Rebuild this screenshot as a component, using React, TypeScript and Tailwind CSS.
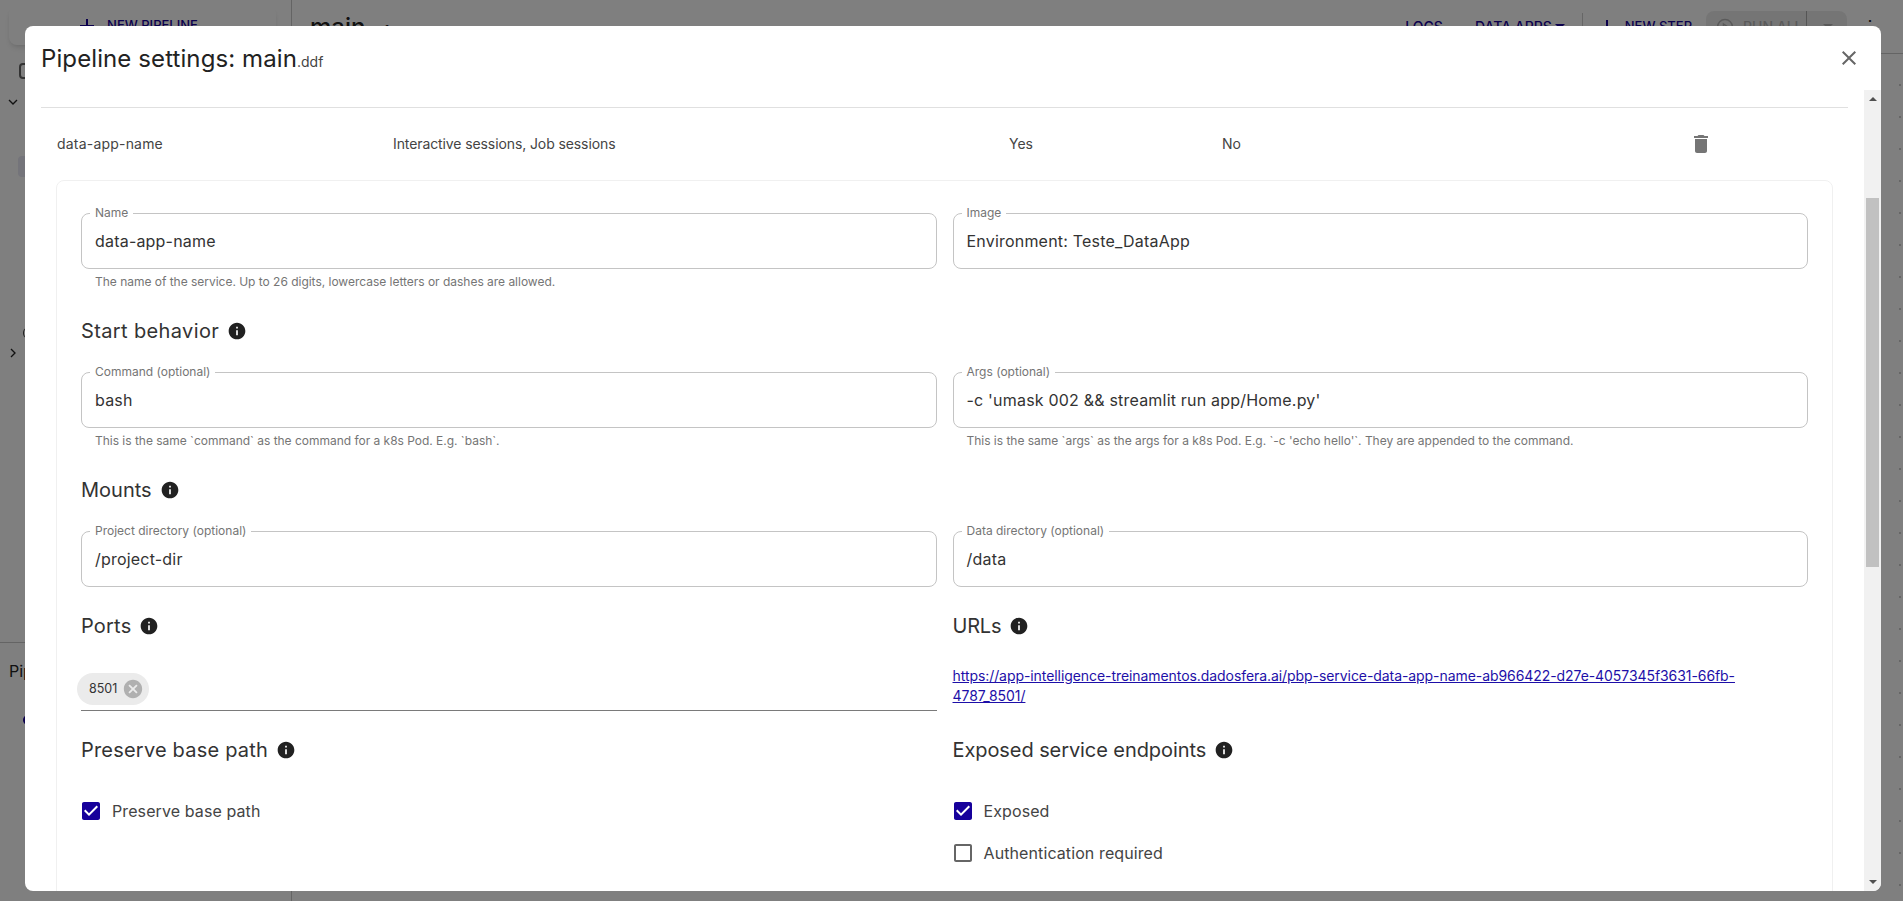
const FONT = "font-['Inter','Noto_Sans',sans-serif]";

function InfoIcon() {
  return (
    <svg viewBox="0 0 24 24" className="h-5 w-5 fill-[#212121]">
      <path d="M12 2C6.48 2 2 6.48 2 12s4.48 10 10 10 10-4.48 10-10S17.52 2 12 2zm1 15h-2v-6h2v6zm0-8h-2V7h2v2z" />
    </svg>
  );
}

function Heading({ title, track = "tracking-[0.2px]" }: { title: string; track?: string }) {
  return (
    <div className={`flex h-[30px] items-center gap-[8px] text-xl text-[#333] ${track}`}>
      <span>{title}</span>
      <InfoIcon />
    </div>
  );
}

function Field({ label, value, help }: { label: string; value: string; help?: string }) {
  return (
    <div>
      <div className="relative flex h-[56px] items-center rounded-lg border border-[#c4c4c4] px-[13px] text-base tracking-[0.2px] text-[#333]">
        <span className="absolute -top-[9px] left-[8px] bg-white px-[5px] text-xs leading-[16px] tracking-normal text-[#757575]">{label}</span>
        {value}
      </div>
      {help && <p className="mt-[3px] px-[14px] text-xs leading-[20px] tracking-[-0.02px] text-[#757575]">{help}</p>}
    </div>
  );
}

function Check({ label, checked }: { label: string; checked?: boolean }) {
  return (
    <div className="flex h-[42px] items-center gap-[9px] text-base tracking-[0.1px] text-[#444]">
      <svg viewBox="0 0 24 24" className={checked ? "-ml-[2px] h-6 w-6 fill-[#16009b]" : "-ml-[2px] h-6 w-6 fill-[#666]"}>
        {checked ? (
          <path d="M19 3H5c-1.11 0-2 .9-2 2v14c0 1.1.89 2 2 2h14c1.11 0 2-.9 2-2V5c0-1.1-.89-2-2-2zm-9 14l-5-5 1.41-1.41L10 14.17l7.59-7.59L19 8l-9 9z" />
        ) : (
          <path d="M19 5v14H5V5h14m0-2H5c-1.1 0-2 .9-2 2v14c0 1.1.9 2 2 2h14c1.1 0 2-.9 2-2V5c0-1.1-.9-2-2-2z" />
        )}
      </svg>
      <span>{label}</span>
    </div>
  );
}

function PlusIcon() {
  return (
    <svg viewBox="0 0 24 24" className="h-6 w-6 fill-none stroke-current stroke-2">
      <path d="M12 5v14M5 12h14" />
    </svg>
  );
}

// what sits behind the dialog, mostly hidden by it
function Backdrop() {
  return (
    <div className="absolute inset-0 flex text-[#16009b]">
      <aside className="flex w-[292px] shrink-0 flex-col border-r border-[#c8c8c8]">
        <div className="mx-[9px] mt-[6px] flex h-[39px] w-[267px] items-center justify-center gap-[8px] rounded-lg bg-white pr-[12px] text-[13px] font-medium shadow-md">
          <PlusIcon /> NEW PIPELINE
        </div>
        <div className="mt-[18px] ml-[19px] h-[16px] w-[16px] rounded-sm border-2 border-[#666]" />
        <div className="mt-[15px] ml-[5px] text-[#222]">
          <svg viewBox="0 0 24 24" className="h-4 w-4 fill-none stroke-current stroke-2">
            <path d="m6 9 6 6 6-6" />
          </svg>
        </div>
        <div className="mt-[46px] ml-[18px] h-[21px] w-[100px] rounded bg-[#e8e8f4]" />
        <div className="mt-[151px] ml-[23px] h-[10px] w-[10px] rounded-sm border border-[#444]" />
        <div className="mt-[7px] ml-[5px] text-[#222]">
          <svg viewBox="0 0 24 24" className="h-4 w-4 fill-none stroke-current stroke-2">
            <path d="m9 6 6 6-6 6" />
          </svg>
        </div>
        <div className="mt-[281px] border-t border-[#c8c8c8] pt-[16px] pl-[9px] text-base text-[#222]">Pipeline steps</div>
        <div className="mt-[32px] ml-[23px] h-[10px] w-[10px] rounded-full bg-[#16009b]" />
      </aside>
      <main className="flex flex-1 flex-col">
        <header className="flex h-[54px] items-center border-b border-[#c8c8c8] pl-[18px] text-sm font-medium">
          <span className="text-2xl text-[#222]">main</span>
          <span className="mt-2 text-xs text-[#222]">.ddf</span>
          <span className="ml-auto">LOGS</span>
          <span className="ml-[32px]">DATA APPS</span>
          <span className="ml-[3px] h-0 w-0 border-x-[5px] border-t-[5px] border-x-transparent border-t-[#16009b]" />
          <span className="ml-[17px] h-[28px] w-px bg-[#ccc]" />
          <span className="ml-[12px]">
            <PlusIcon />
          </span>
          <span className="ml-[6px] text-[13px]">NEW STEP</span>
          <span className="ml-[14px] flex h-[32px] w-[141px] items-center rounded-lg bg-[#ebebeb] pl-[10px] text-[#b5b5b5]">
            <svg viewBox="0 0 24 24" className="h-[18px] w-[18px] fill-none stroke-current stroke-2">
              <circle cx="12" cy="12" r="10" />
              <path d="m10 8 6 4-6 4z" />
            </svg>
            <span className="ml-[9px] w-[63px]">RUN ALL</span>
            <span className="h-[32px] w-px bg-[#aaa]" />
            <span className="ml-[16px] h-0 w-0 border-x-[5px] border-t-[5px] border-x-transparent border-t-[#b5b5b5]" />
          </span>
          <span className="ml-[14px] w-[42px] text-lg text-[#222]">⋮</span>
        </header>
        <div className="flex-1 bg-[image:radial-gradient(#cccccc_1.5px,transparent_1.5px)] bg-size-[32px_32px] bg-position-[-8px_15px]" />
      </main>
    </div>
  );
}

export default function App() {
  return (
    <div className={`relative h-screen w-full overflow-hidden bg-white ${FONT}`}>
      <Backdrop />
      <div className="absolute inset-0 bg-black/50" />

      <div className="absolute top-[26px] left-[25px] flex h-[865px] w-[1856px] flex-col overflow-hidden rounded-lg bg-white">
        {/* Title */}
        <div className="flex h-[64px] shrink-0 items-center justify-between pr-[20px] pl-[16px]">
          <h2 className="pt-[2px] text-2xl tracking-[0.1px] text-[#222]">
            Pipeline settings: main<span className="text-sm tracking-normal text-[#444]">.ddf</span>
          </h2>
          <svg viewBox="0 0 24 24" className="h-6 w-6 fill-[#666]">
            <path d="M19 6.41 17.59 5 12 10.59 6.41 5 5 6.41 10.59 12 5 17.59 6.41 19 12 13.41 17.59 19 19 17.59 13.41 12z" />
          </svg>
        </div>

        <div className="flex min-h-0 flex-1">
          <div className="min-w-0 flex-1 overflow-hidden px-[16px] pt-[17px]">
            <div className="border-t border-[#e0e0e0]" />
            {/* Service row */}
            <div className="grid h-[72px] grid-cols-[336px_616px_213px_467px_24px] items-center px-[16px] text-sm text-[#444]">
              <span className="tracking-[0.2px]">data-app-name</span>
              <span className="tracking-[-0.1px]">Interactive sessions, Job sessions</span>
              <span>Yes</span>
              <span>No</span>
              <svg viewBox="0 0 24 24" className="h-6 w-6 fill-[#757575]">
                <path d="M6 19c0 1.1.9 2 2 2h8c1.1 0 2-.9 2-2V7H6v12zM19 4h-3.5l-1-1h-5l-1 1H5v2h14V4z" />
              </svg>
            </div>

            {/* Service details */}
            <div className="mx-[15px] rounded-lg border border-[#f0f0f0] px-6 pt-8 pb-[120px]">
              <div className="grid grid-cols-2 gap-x-4">
                <Field label="Name" value="data-app-name" help="The name of the service. Up to 26 digits, lowercase letters or dashes are allowed." />
                <Field label="Image" value="Environment: Teste_DataApp" />
              </div>

              <div className="mt-[24px] flex flex-col gap-[24px]">
                <Heading title="Start behavior" track="tracking-[0.37px]" />
                <div className="mt-[2px] grid grid-cols-2 gap-x-4">
                  <Field label="Command (optional)" value="bash" help="This is the same `command` as the command for a k8s Pod. E.g. `bash`." />
                  <Field
                    label="Args (optional)"
                    value="-c 'umask 002 && streamlit run app/Home.py'"
                    help="This is the same `args` as the args for a k8s Pod. E.g. `-c 'echo hello'`. They are appended to the command."
                  />
                </div>

                <Heading title="Mounts" track="tracking-normal" />
                <div className="mt-[2px] grid grid-cols-2 gap-x-4">
                  <Field label="Project directory (optional)" value="/project-dir" />
                  <Field label="Data directory (optional)" value="/data" />
                </div>

                <div className="grid grid-cols-2 gap-x-4 gap-y-[26px]">
                  <Heading title="Ports" />
                  <Heading title="URLs" track="tracking-[-0.2px]" />
                  <div className="h-[44px] border-b border-[#7a7a7a] pt-[6px]">
                    <div className="-ml-[4px] flex h-[32px] w-[72px] items-center justify-between rounded-full bg-[#ebebeb] pr-[5px] pl-[12px] text-[12.5px] text-[#333]">
                      8501
                      <svg viewBox="0 0 24 24" className="h-[22px] w-[22px] fill-[#b0b0b0]">
                        <path d="M12 2C6.47 2 2 6.47 2 12s4.47 10 10 10 10-4.47 10-10S17.53 2 12 2zm5 13.59L15.59 17 12 13.41 8.41 17 7 15.59 10.59 12 7 8.41 8.41 7 12 10.59 15.59 7 17 8.41 13.41 12 17 15.59z" />
                      </svg>
                    </div>
                  </div>
                  <a className="-mt-px block w-[800px] text-sm leading-[20px] tracking-[-0.07px] break-words text-[#1d0fa8] underline">
                    https://app-intelligence-treinamentos.dadosfera.ai/pbp-service-data-app-name-ab966422-d27e-4057345f3631-66fb-4787_8501/
                  </a>
                </div>

                <div className="grid grid-cols-2 gap-x-4 gap-y-[25px]">
                  <Heading title="Preserve base path" />
                  <Heading title="Exposed service endpoints" track="tracking-[-0.08px]" />
                  <Check label="Preserve base path" checked />
                  <div>
                    <Check label="Exposed" checked />
                    <Check label="Authentication required" />
                  </div>
                </div>
              </div>
            </div>
          </div>

          {/* Scrollbar */}
          <div className="relative w-[17px] shrink-0 bg-[#f1f1f1]">
            <span className="absolute top-[7px] left-[5px] h-0 w-0 border-x-[4px] border-b-[4px] border-x-transparent border-b-[#505050]" />
            <div className="absolute top-[108px] left-[2px] h-[369px] w-[13px] bg-[#c1c1c1]" />
            <span className="absolute bottom-[7px] left-[5px] h-0 w-0 border-x-[4px] border-t-[4px] border-x-transparent border-t-[#505050]" />
          </div>
        </div>
      </div>
    </div>
  );
}
